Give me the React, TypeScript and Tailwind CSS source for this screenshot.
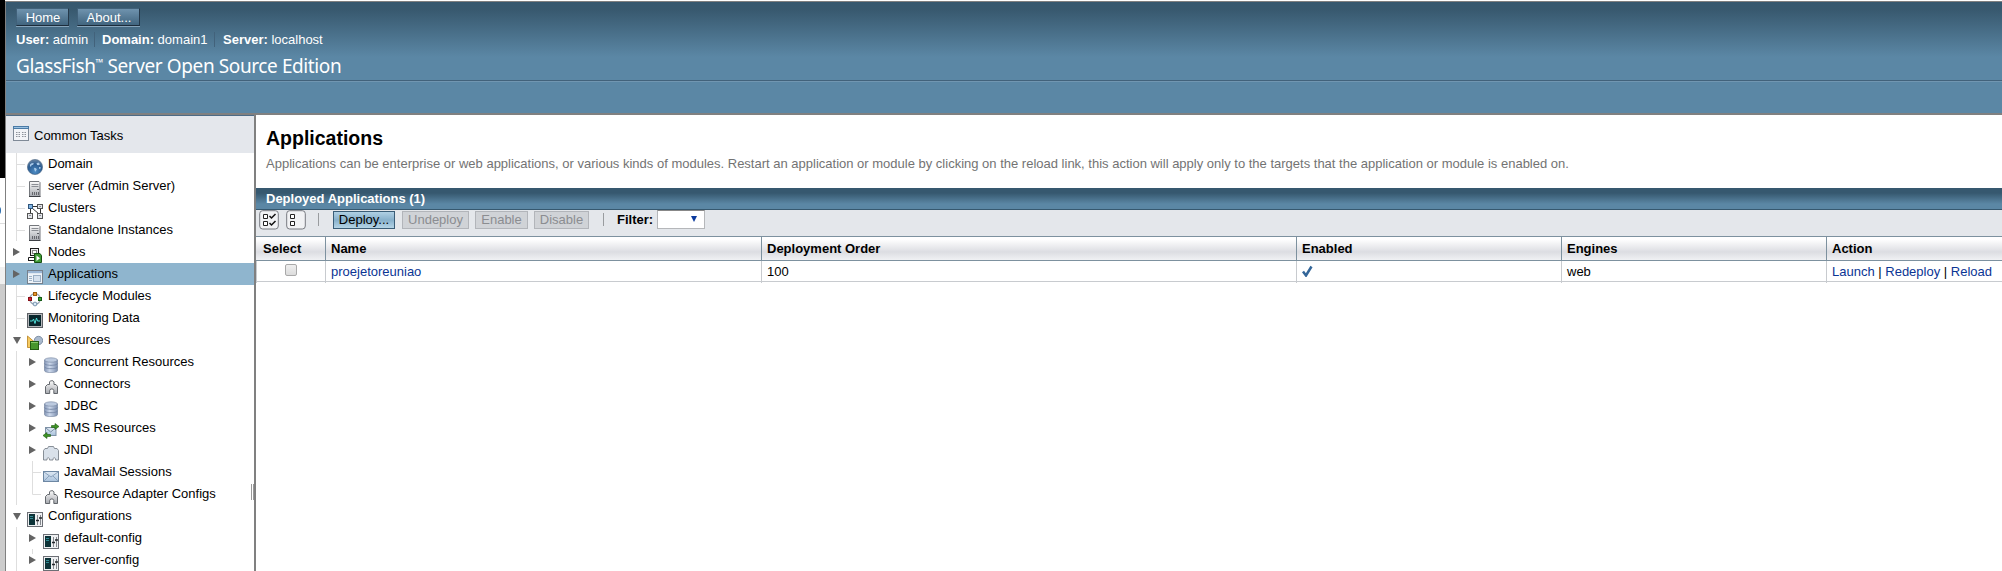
import React from "react";

type IconName =
  | "globe" | "server" | "cluster" | "node" | "app" | "life" | "monitor" | "res"
  | "db" | "plug" | "jms" | "jndi" | "mail" | "config";

const Defs = () => (
  <svg width="0" height="0" className="absolute" aria-hidden="true">
    <defs>
      <linearGradient id="gDb" x1="0" x2="1" y1="0" y2="0">
        <stop offset="0" stopColor="#8294b5" />
        <stop offset=".4" stopColor="#cdd9ec" />
        <stop offset="1" stopColor="#7c8eae" />
      </linearGradient>
      <linearGradient id="gGrey" x1="0" x2="0" y1="0" y2="1">
        <stop offset="0" stopColor="#fafafa" />
        <stop offset="1" stopColor="#a6a9af" />
      </linearGradient>
      <linearGradient id="gBlue" x1="0" x2="0" y1="0" y2="1">
        <stop offset="0" stopColor="#dfe9f4" />
        <stop offset="1" stopColor="#a9c2dc" />
      </linearGradient>
      <radialGradient id="gGlobe" cx=".5" cy=".8" r=".8">
        <stop offset="0" stopColor="#4d8cc4" />
        <stop offset=".6" stopColor="#2a5c92" />
        <stop offset="1" stopColor="#6b86a3" />
      </radialGradient>
    </defs>
  </svg>
);

const art: Record<IconName, React.ReactNode> = {
  globe: (
    <>
      <circle cx="8" cy="8" r="7.6" fill="url(#gGlobe)" stroke="#4a6481" strokeWidth=".6" />
      <path d="M3 5.500 5 4l2 .5-1 1.200-1.500.6-.5 1.500L3 7.300zM9.500 4.300l2-.8 1.500 1.800-1.500 1-1.400-.4zM7 8.800l2 .5.8 1.200-1.400 2.200-1-1.600zM12 8l1.800.2-.6 2-1.200-.7z" fill="#a9cbea" />
    </>
  ),
  server: (
    <>
      <path d="M2.500.5h9.500l1 1v14H2.500z" fill="url(#gGrey)" stroke="#74777c" />
      <path d="M4.500 3.500h7M4.500 5.500h7" stroke="#8b8e94" />
      <path d="M10 8h2v1h-2z" fill="#5a5d63" />
      <path d="M5 12.500h1M7 12.500h1M9 12.500h1M11 12.500h1" stroke="#66686d" strokeWidth="3" />
      <path d="M2 15.500h11.500" stroke="#3d3f44" />
    </>
  ),
  cluster: (
    <>
      <path d="M6 3.500h5M3.500 6v5M5 5l7 6M13.500 6v5" stroke="#333" fill="none" />
      <rect x="1.500" y="1.500" width="4" height="4" fill="#7fb4e4" stroke="#31567c" />
      <rect x="10.500" y="1.500" width="5" height="4" fill="#e4e6ea" stroke="#555" />
      <rect x=".5" y="10.500" width="5" height="5" fill="#e4e6ea" stroke="#555" />
      <rect x="10.500" y="10.500" width="5" height="5" fill="#e4e6ea" stroke="#555" />
      <path d="M2 12.500h2M12 12.500h2M12 3.500h2" stroke="#8c9097" />
    </>
  ),
  node: (
    <>
      <rect x="3.500" y="1.500" width="8" height="7" fill="#eee" stroke="#1c1c1c" />
      <rect x="5.500" y="3.500" width="4" height="3" fill="#fff" stroke="#888" />
      <path d="M7.500 9v1.500M1.500 14v-3.500h6M1 13.500h7" stroke="#1c1c1c" fill="none" />
      <path d="M7.500 6.500h5.500l1.500 2v7h-7z" fill="#3f9a35" stroke="#174f14" />
      <path d="M9.500 8.500v5.500l3.500-2.700z" fill="#fff" />
    </>
  ),
  app: (
    <>
      <rect x=".5" y="1.500" width="15" height="13" fill="#eef3f8" stroke="#76808c" />
      <path d="M1 2h14v2H1z" fill="#9bb6d4" />
      <path d="M1 4.500h14" stroke="#dfe8f1" />
      <path d="M2 7.500h3M2 9.500h3M2 11.500h3" stroke="#9bb0c6" />
      <rect x="6.500" y="6.500" width="7" height="6" fill="#d5e1ee" stroke="#9bb0c6" />
    </>
  ),
  life: (
    <>
      <circle cx="8" cy="8" r="5.300" fill="none" stroke="#9aa7b5" strokeWidth="1.300" />
      <rect x="6.500" y="1.500" width="3" height="3" fill="#e9982c" stroke="#9c5c0d" />
      <rect x="1.500" y="6.500" width="3" height="3" fill="#d52733" stroke="#861018" />
      <rect x="11.500" y="6.500" width="3" height="3" fill="#38a534" stroke="#175c17" />
      <circle cx="8" cy="13" r="1.900" fill="#dcebf7" stroke="#5f7f9d" strokeWidth=".8" />
    </>
  ),
  monitor: (
    <>
      <rect x=".5" y=".5" width="15" height="14" fill="#b6b8bc" stroke="#5d6065" />
      <rect x="2" y="2" width="12" height="11" fill="#08262c" />
      <path d="M3 8h2.500l1-2 1.500 4.500L9.500 5l1 3H13" fill="none" stroke="#4fe0da" />
    </>
  ),
  res: (
    <>
      <circle cx="11.500" cy="5.500" r="4.200" fill="#a9b9cd" stroke="#6d8098" strokeWidth=".8" />
      <path d="M.5 1V12.500h4V8L8 7.500z" fill="#f6cb62" stroke="#c08b2c" strokeWidth=".9" />
      <rect x="3.500" y="6.500" width="8" height="8" fill="#46962c" stroke="#235c12" />
      <path d="M4 7.500h7" stroke="#84c867" />
    </>
  ),
  db: (
    <>
      <path d="M1.500 3v10.500c0 1.400 3 2.200 6.500 2.200s6.500-.8 6.500-2.200V3z" fill="url(#gDb)" stroke="#6c7c97" strokeWidth=".6" />
      <path d="M1.500 6.300c0 1.300 3 2 6.500 2s6.500-.7 6.500-2M1.500 9.700c0 1.300 3 2 6.500 2s6.500-.7 6.500-2" fill="none" stroke="#6f80a0" strokeWidth=".8" />
      <ellipse cx="8" cy="3" rx="6.500" ry="2.200" fill="#bccadf" stroke="#73839d" strokeWidth=".6" />
    </>
  ),
  plug: (
    <path
      d="M6.500 5.500V3L7.500 1.800h2.500L11 3V5.500H13L14.500 7.500V14.500H10.800V11.500L9.800 10H7.700L6.700 11.500V14.500H2.500V7.500L4.500 5.500z"
      fill="url(#gGrey)" stroke="#565a60" strokeWidth=".9"
    />
  ),
  jms: (
    <>
      <rect x="2.500" y="4.500" width="10.500" height="8" fill="url(#gBlue)" stroke="#7e91a6" />
      <path d="m3 5 4.700 4 4.800-4" fill="none" stroke="#7e91a6" />
      <path d="M8.500 2.500h3.500V.5l4 3-4 3V4.500H8.500z" fill="#3f9325" stroke="#1f5a10" strokeWidth=".6" />
      <path d="M7.500 11.500H4V9.500l-4 3 4 3v-2h3.500z" fill="#3f9325" stroke="#1f5a10" strokeWidth=".6" />
    </>
  ),
  jndi: (
    <path
      d="M.5 15V5.500L2 3.500H4.500L5.500 1.500H10.500L11.500 3.500H14L15.500 5.500V15H12.500C13 12 9.500 12 10 15H6.500C7 12 3.500 12 4 15z"
      fill="#d9e1ea" stroke="#7d848d" strokeWidth=".9"
    />
  ),
  mail: (
    <>
      <rect x=".5" y="4.500" width="15" height="10" fill="url(#gBlue)" stroke="#6d87a3" />
      <path d="m1 5 7 5 7-5M1 14l5-5M15 14l-5-5" fill="none" stroke="#8ba3bd" />
    </>
  ),
  config: (
    <>
      <rect x=".5" y="1.500" width="15" height="14" fill="#eff0f2" stroke="#6c6f75" />
      <rect x="2" y="3" width="6" height="11" fill="#0d3338" />
      <path d="M3 5.500h3M3 7.500h3" stroke="#2f8a93" />
      <path d="M10.500 4v10M13.500 4v10" stroke="#85898e" />
      <path d="M9 9.500h3M12 7h3" stroke="#24272b" strokeWidth="1.500" />
    </>
  ),
};

const Icon = ({ name }: { name: IconName }) => (
  <svg width="16" height="16" viewBox="0 0 16 16" className="mt-[6px] shrink-0">{art[name]}</svg>
);

type Mark = "tee" | "right" | "down" | "end" | "stub";

const Tick = ({ mark }: { mark: Mark | "line" }) => (
  <svg width="16" height="22" viewBox="0 0 16 22" className="shrink-0">
    {mark === "tee" && <path d="M5.500 0v22M6 11.500h8" stroke="#dedede" fill="none" />}
    {mark === "end" && <path d="M5.500 0v11.500H14" stroke="#dedede" fill="none" />}
    {mark === "line" && <path d="M5.500 0v22" stroke="#dedede" />}
    {mark === "stub" && <path d="M5.500 0v5" stroke="#dedede" />}
    {(mark === "right" || mark === "stub") && <path d="M2 7v8l7-4z" fill="#646464" />}
    {mark === "down" && <path d="M2 8h8l-4 7z" fill="#646464" />}
  </svg>
);

type Row = { label: string; icon: IconName; mark: Mark; child?: boolean; on?: boolean };
const rows: Row[] = [
  { label: "Domain", icon: "globe", mark: "tee" },
  { label: "server (Admin Server)", icon: "server", mark: "tee" },
  { label: "Clusters", icon: "cluster", mark: "tee" },
  { label: "Standalone Instances", icon: "server", mark: "tee" },
  { label: "Nodes", icon: "node", mark: "right" },
  { label: "Applications", icon: "app", mark: "right", on: true },
  { label: "Lifecycle Modules", icon: "life", mark: "tee" },
  { label: "Monitoring Data", icon: "monitor", mark: "tee" },
  { label: "Resources", icon: "res", mark: "down" },
  { label: "Concurrent Resources", icon: "db", mark: "right", child: true },
  { label: "Connectors", icon: "plug", mark: "right", child: true },
  { label: "JDBC", icon: "db", mark: "right", child: true },
  { label: "JMS Resources", icon: "jms", mark: "right", child: true },
  { label: "JNDI", icon: "jndi", mark: "right", child: true },
  { label: "JavaMail Sessions", icon: "mail", mark: "tee", child: true },
  { label: "Resource Adapter Configs", icon: "plug", mark: "end", child: true },
  { label: "Configurations", icon: "config", mark: "down" },
  { label: "default-config", icon: "config", mark: "right", child: true },
  { label: "server-config", icon: "config", mark: "stub", child: true },
];

const TreeRow = ({ row }: { row: Row }) => (
  <div className={`flex h-[22px] shrink-0 pl-[5px] ${row.on ? "bg-[#8fb5ce]" : ""}`}>
    {row.child && <Tick mark="line" />}
    <Tick mark={row.mark} />
    <Icon name={row.icon} />
    <span className="ml-[5px] leading-[22px] whitespace-nowrap">{row.label}</span>
  </div>
);

const HeadButton = ({ children, w }: { children: string; w: string }) => (
  <button className={`h-[18px] border border-t-[#41617a] border-l-[#41617a] border-r-[#25394a] border-b-[#1c2c3b] bg-linear-to-b from-[#6f93ae] to-[#41657f] pl-px text-center leading-[15px] shadow-[0_1px_0_#86a4ba] ${w}`}>
    {children}
  </button>
);

const Disabled = ({ children, w }: { children: string; w: string }) => (
  <button className={`mt-px h-[18px] border border-[#b2b5ba] bg-[#d0d3d7] leading-[16px] text-[#8b8d91] ${w}`}>{children}</button>
);

const headers = ["Select", "Name", "Deployment Order", "Enabled", "Engines", "Action"];
const grid = "grid grid-cols-[69px_436px_535px_265px_265px_1fr]";

export default function App() {
  return (
    <div className="flex h-[571px] w-[2002px] overflow-hidden bg-white font-['Liberation_Sans',Arial,sans-serif] text-[13px] text-black">
      <Defs />
      <div className="flex w-[5px] shrink-0 flex-col">
        <div className="h-[178px] bg-black" />
        <div className="flex h-[45px] flex-col justify-center">
          <div className="mt-[20px] ml-[-3px] h-[9px] w-[4px] rounded-r-full bg-[#2f6fae]" />
        </div>
        <div className="h-[44px] border-t border-[#dddddd]" />
        <div className="h-[17px] bg-[#f0f0f0]" />
        <div className="grow bg-[#cccccc]" />
      </div>
      <div className="mt-px flex min-w-0 grow flex-col border-t border-l border-[#808080]">
        <header className="flex h-[111px] shrink-0 flex-col bg-[linear-gradient(#36586f_0,#38596f_8px,#5b87a5_55px)] text-white">
          <div className="flex h-[79px] shrink-0 flex-col border-b border-[#42627b] pl-[10px]">
            <div className="mt-[6px] flex gap-[8px]">
              <HeadButton w="w-[53px]">Home</HeadButton>
              <HeadButton w="w-[63px]">About...</HeadButton>
            </div>
            <div className="mt-[6px] flex h-[15px] leading-[16px] whitespace-nowrap">
              <span className="w-[79px] border-r border-[#42627b]"><b>User:</b> admin</span>
              <span className="w-[120px] border-r border-[#42627b] pl-[7px]"><b>Domain:</b> domain1</span>
              <span className="pl-[8px]"><b>Server:</b> localhost</span>
            </div>
            <div className="mt-[5px] flex font-['Noto_Sans',sans-serif] text-[19px] leading-[28px] tracking-[-0.4px] whitespace-nowrap">
              GlassFish<span className="mt-[-4px] text-[10px]">™</span>&nbsp;Server Open Source Edition
            </div>
          </div>
          <div className="border-t border-[#7196b1]" />
        </header>
        <div className="flex min-h-0 grow border-t-2 border-[#808080]">
          <aside className="relative flex w-[250px] shrink-0 flex-col border-r-2 border-[#808080]">
            <div className="flex h-[38px] shrink-0 border-t border-[#4d6b86] bg-[#e4e7ec] pl-[7px]">
              <svg width="16" height="15" viewBox="0 0 16 15" className="mt-[10px]">
                <rect x=".5" y=".5" width="15" height="14" fill="#f2f4f7" stroke="#7f8a97" />
                <path d="M0 0h16v3H0z" fill="#4b7ba6" />
                <path d="M1 1.500h14" stroke="#9cc3e3" />
                <path d="M3 6.500h4M9 6.500h4M3 8.500h4M9 8.500h4M3 10.500h4M9 10.500h4" stroke="#8d929a" strokeDasharray="1 .5" />
              </svg>
              <span className="ml-[5px] leading-[39px]">Common Tasks</span>
            </div>
            {rows.map((r) => <TreeRow key={r.label} row={r} />)}
            <div className="absolute top-[369px] right-0 h-[16px] w-[3px] border-x border-[#999]" />
          </aside>
          <main className="min-w-0 grow">
            <h1 className="ml-[10px] pt-[11px] h-[36px] text-[19.500px] leading-[24px] font-bold">Applications</h1>
            <p className="ml-[10px] mt-[5px] h-[32px] leading-[16px] whitespace-nowrap text-[#737373]">
              Applications can be enterprise or web applications, or various kinds of modules. Restart an application or module by clicking on the reload link, this action will apply only to the targets that the application or module is enabled on.
            </p>
            <div className="h-[22px] border-b border-[#36586f] bg-[linear-gradient(#36586f_0,#36586f_5px,#5b87a5_16px)] pl-[10px] leading-[21px] font-bold text-white">
              Deployed Applications (1)
            </div>
            <div className="flex h-[26px] bg-[#e4e7eb] pl-[3px]">
              <svg width="20" height="20" viewBox="0 0 20 20">
                <rect x=".7" y=".7" width="18.600" height="18.300" rx="3" fill="#f1f2f4" stroke="#777a80" />
                <path d="M4.500 4.500h4v4h-4zM4.500 11.500h4v4h-4z" fill="#fff" stroke="#222" />
                <path d="m10.500 6 2 2 4-4M10.500 13l2 2 4-4" fill="none" stroke="#111" strokeWidth="1.500" />
              </svg>
              <svg width="20" height="20" viewBox="0 0 20 20" className="ml-[7px]">
                <rect x=".7" y=".7" width="18.600" height="18.300" rx="3" fill="#f1f2f4" stroke="#777a80" />
                <path d="M4.500 4.500h4v4h-4zM4.500 11.500h4v4h-4z" fill="#fff" stroke="#222" />
              </svg>
              <div className="mt-[3px] ml-[12px] h-[13px] w-px bg-[#999c9f]" />
              <button className="mt-px ml-[14px] h-[18px] w-[62px] border border-[#3a5d77] bg-linear-to-b from-[#b0d0e4] via-[#87b0cb] to-[#b4d4e6] leading-[16px]">Deploy...</button>
              <div className="ml-[7px] flex gap-[6px]">
                <Disabled w="w-[67px]">Undeploy</Disabled>
                <Disabled w="w-[53px]">Enable</Disabled>
                <Disabled w="w-[55px]">Disable</Disabled>
              </div>
              <div className="mt-[3px] ml-[14px] h-[13px] w-px bg-[#999c9f]" />
              <b className="ml-[13px] w-[40px] leading-[19px]">Filter:</b>
              <div className="flex h-[19px] w-[48px] justify-end border border-t-[#888] border-[#b5b7ba] bg-white pr-[6px]">
                <svg width="8" height="17" viewBox="0 0 8 17"><path d="M1 5h6l-3 6z" fill="#0b3a9d" /></svg>
              </div>
            </div>
            <div className={`${grid} h-[25px] border-y border-[#7d919f] bg-linear-to-b from-white from-10% via-[#dcdde2] via-65% to-[#f0f1f4] font-bold`}>
              {headers.map((h, i) => (
                <div key={h} className={`leading-[24px] ${i ? "border-l border-[#7d919f] pl-[5px]" : "pl-[7px]"}`}>{h}</div>
              ))}
            </div>
            <div className={`${grid} h-[21px] border-b border-[#c8cbcf] leading-[22px]`}>
              <div className="border-l border-[#c8cbcf] pl-[28px]">
                <div className="mt-[3px] size-[12px] rounded-[2px] border border-[#a9a9a9] bg-linear-to-b from-[#efefef] to-[#dcdcdc]" />
              </div>
              <div className="border-l border-[#c8cbcf] pl-[5px] text-[#0b3594]">proejetoreuniao</div>
              <div className="border-l border-[#c8cbcf] pl-[5px]">100</div>
              <div className="border-l border-[#c8cbcf] pl-[5px]">
                <svg width="11" height="12" viewBox="0 0 11 12" className="mt-[4px]">
                  <path d="m1 6.500 3 4L9.500 1.500" fill="none" stroke="#336699" strokeWidth="2.500" />
                </svg>
              </div>
              <div className="border-l border-[#c8cbcf] pl-[5px]">web</div>
              <div className="border-l border-[#c8cbcf] pl-[5px] whitespace-nowrap text-[#0b3594]">
                Launch <span className="text-black">|</span> Redeploy <span className="text-black">|</span> Reload
              </div>
            </div>
          </main>
        </div>
      </div>
    </div>
  );
}
